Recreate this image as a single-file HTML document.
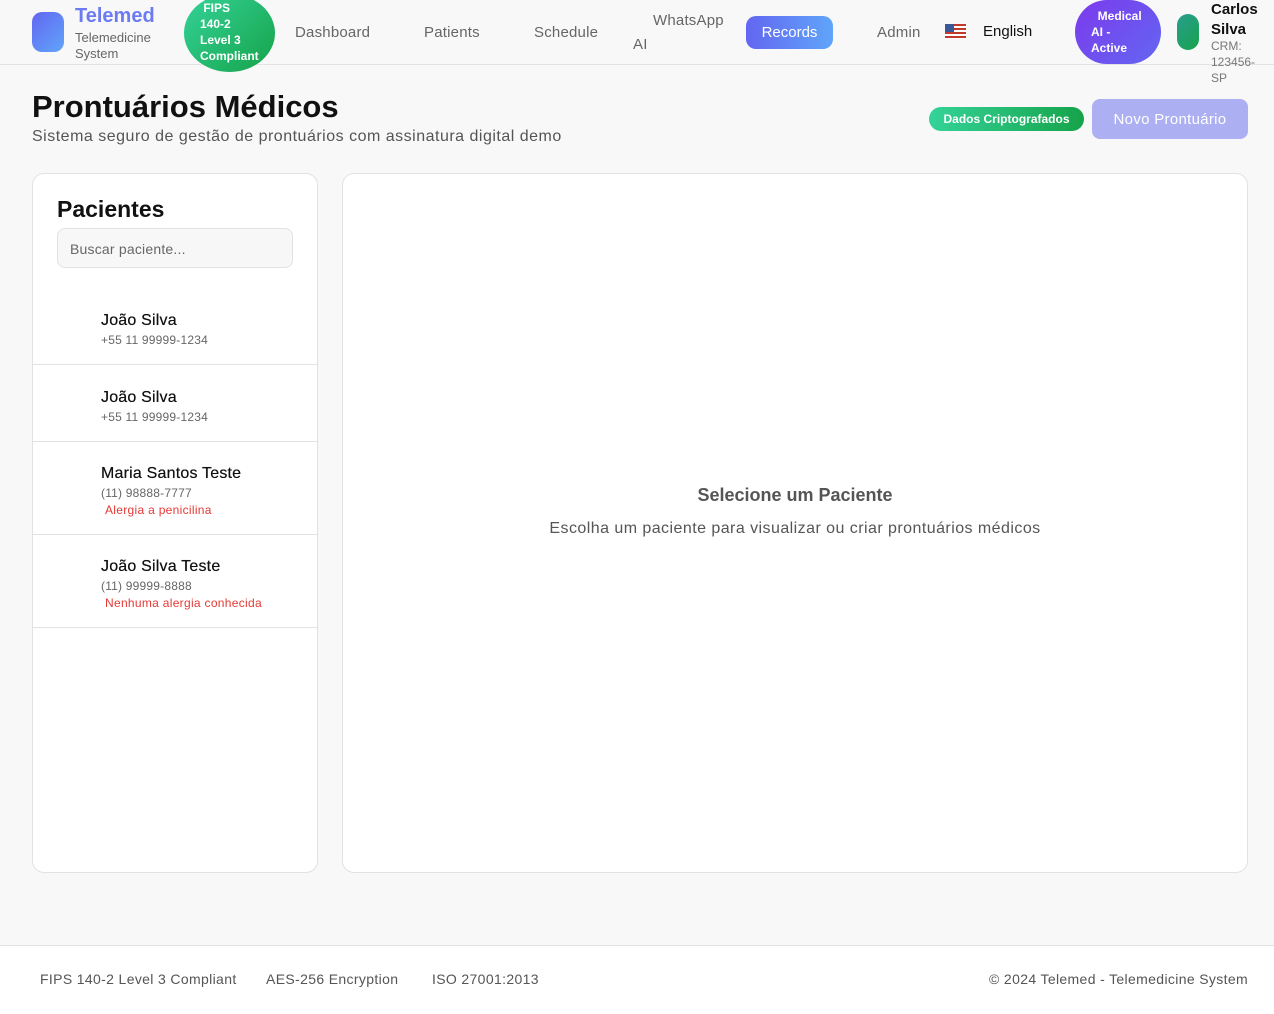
<!DOCTYPE html>
<html><head><meta charset="utf-8"><style>
*{box-sizing:border-box;margin:0;padding:0}
body{width:1274px;height:1014px;background:#f8f8f8;font-family:"Liberation Sans",sans-serif;position:relative;overflow:hidden;color:#111}
.a{position:absolute}
.hdr{position:absolute;left:0;top:0;width:1274px;height:65px;border-bottom:1px solid #e3e3e3;background:#f8f8f8}
.nav{font-size:15px;color:#666;letter-spacing:0.2px}
.card{position:absolute;background:#fff;border:1px solid #e2e2e2;border-radius:12px}
.pi{position:absolute;left:0;width:284px;border-bottom:1px solid #e2e2e2}
.pn{position:absolute;left:68px;font-size:16px;color:#111;letter-spacing:0.2px;text-shadow:0 0 0.4px #111}
.pp{position:absolute;left:68px;font-size:12px;color:#666;letter-spacing:0.2px}
.pa{position:absolute;left:72px;font-size:12px;color:#e53935;letter-spacing:0.3px}
.ft{position:absolute;top:971px;font-size:14px;color:#555;letter-spacing:0.35px}
</style></head><body>
<div class="hdr"></div>
<div class="a" style="left:32px;top:12px;width:32px;height:40px;border-radius:10px;background:linear-gradient(135deg,#6366f1,#60a5fa)"></div>
<div class="a" style="left:75px;top:5px;font-size:20px;font-weight:bold;color:#6b7cf2">Telemed</div>
<div class="a" style="left:75px;top:30px;font-size:13px;color:#666;line-height:16px">Telemedicine<br>System</div>
<div class="a" style="left:184px;top:-6px;width:91px;height:78px;border-radius:50%;background:linear-gradient(135deg,#34d399,#16a34a)"></div>
<div class="a" style="left:200px;top:0px;font-size:12px;font-weight:bold;color:#fff;line-height:16px">&nbsp;FIPS<br>140-2<br>Level 3<br>Compliant</div>
<div class="a nav" style="left:295px;top:24px">Dashboard</div>
<div class="a nav" style="left:424px;top:24px">Patients</div>
<div class="a nav" style="left:534px;top:24px">Schedule</div>
<div class="a nav" style="left:653px;top:12px">WhatsApp</div>
<div class="a nav" style="left:633px;top:36px">AI</div>
<div class="a" style="left:746px;top:16px;width:87px;height:33px;border-radius:10px;background:linear-gradient(90deg,#6366f1,#60a5fa);color:#fff;font-size:15px;text-align:center;line-height:33px">Records</div>
<div class="a nav" style="left:877px;top:24px">Admin</div>
<div class="a" style="left:945px;top:24px;width:21px;height:15px;background:repeating-linear-gradient(#c0392b 0 2px,#fff 2px 4px)"><div style="width:9px;height:8px;background:#3b5998"></div></div>
<div class="a" style="left:983px;top:23px;font-size:15px;color:#111">English</div>
<div class="a" style="left:1075px;top:0;width:86px;height:64px;border-radius:32px;background:linear-gradient(135deg,#7c3aed,#6366f1)"></div>
<div class="a" style="left:1091px;top:8px;font-size:12px;font-weight:bold;color:#fff;line-height:16px">&nbsp;&nbsp;Medical<br>AI -<br>Active</div>
<div class="a" style="left:1177px;top:14px;width:22px;height:36px;border-radius:11px;background:linear-gradient(135deg,#2a9d8f,#16a34a)"></div>
<div class="a" style="left:1211px;top:0;font-size:15px;font-weight:bold;line-height:20px">Carlos<br>Silva</div>
<div class="a" style="left:1211px;top:38px;font-size:12px;color:#777;line-height:16px">CRM:<br>123456-<br>SP</div>

<div class="a" style="left:32px;top:89px;font-size:31px;font-weight:bold">Prontuários Médicos</div>
<div class="a" style="left:32px;top:128px;font-size:16px;color:#555;letter-spacing:0.5px">Sistema seguro de gestão de prontuários com assinatura digital demo</div>
<div class="a" style="left:929px;top:107px;width:155px;height:24px;border-radius:12px;background:linear-gradient(90deg,#34d399,#16a34a);color:#fff;font-size:12px;font-weight:bold;text-align:center;line-height:24px">Dados Criptografados</div>
<div class="a" style="left:1092px;top:99px;width:156px;height:40px;border-radius:8px;background:#acaff2;color:#fff;font-size:15px;text-align:center;line-height:42px;letter-spacing:0.3px">Novo Prontuário</div>

<div class="card" style="left:32px;top:173px;width:286px;height:700px;overflow:hidden">
 <div class="a" style="left:24px;top:22px;font-size:23px;font-weight:bold">Pacientes</div>
 <div class="a" style="left:24px;top:54px;width:236px;height:40px;border:1px solid #e2e2e2;border-radius:8px;background:#f7f7f7;font-size:14px;color:#666;padding:12px 12px;letter-spacing:0.2px">Buscar paciente...</div>
 <div class="pi" style="top:114px;height:77px"><div class="pn" style="top:24px">João Silva</div><div class="pp" style="top:45px">+55 11 99999-1234</div></div>
 <div class="pi" style="top:191px;height:77px"><div class="pn" style="top:24px">João Silva</div><div class="pp" style="top:45px">+55 11 99999-1234</div></div>
 <div class="pi" style="top:268px;height:93px"><div class="pn" style="top:23px">Maria Santos Teste</div><div class="pp" style="top:44px">(11) 98888-7777</div><div class="pa" style="top:61px">Alergia a penicilina</div></div>
 <div class="pi" style="top:361px;height:93px"><div class="pn" style="top:23px">João Silva Teste</div><div class="pp" style="top:44px">(11) 99999-8888</div><div class="pa" style="top:61px">Nenhuma alergia conhecida</div></div>
</div>

<div class="card" style="left:342px;top:173px;width:906px;height:700px">
 <div class="a" style="left:0;width:904px;top:311px;text-align:center;font-size:18px;font-weight:bold;color:#555">Selecione um Paciente</div>
 <div class="a" style="left:0;width:904px;top:346px;text-align:center;font-size:16px;color:#555;letter-spacing:0.45px">Escolha um paciente para visualizar ou criar prontuários médicos</div>
</div>

<div class="a" style="left:0;top:945px;width:1274px;height:69px;background:#fff;border-top:1px solid #e3e3e3"></div>
<div class="ft" style="left:40px">FIPS 140-2 Level 3 Compliant</div>
<div class="ft" style="left:266px">AES-256 Encryption</div>
<div class="ft" style="left:432px">ISO 27001:2013</div>
<div class="ft" style="right:26px">© 2024 Telemed - Telemedicine System</div>
</body></html>
